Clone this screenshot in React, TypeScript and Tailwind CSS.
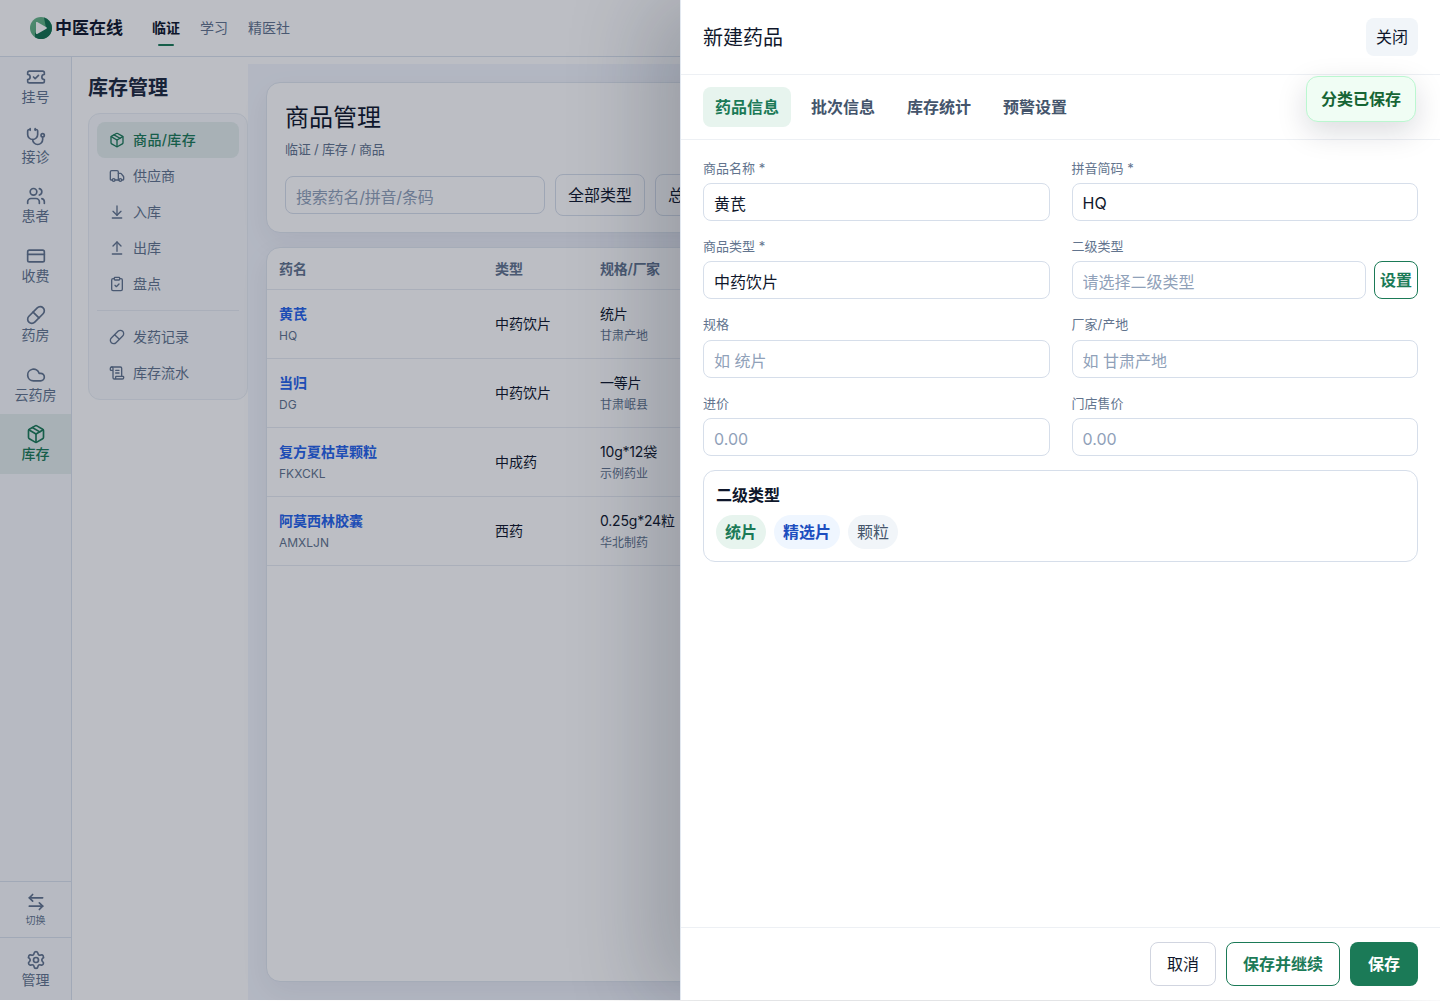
import {
  ArrowDownToLine,
  ArrowLeftRight,
  ArrowUpFromLine,
  ClipboardCheck,
  Cloud,
  CreditCard,
  Package,
  Pill,
  ScrollText,
  Settings,
  Stethoscope,
  TicketCheck,
  Truck,
  Users,
} from "lucide-react";

const railItems = [
  { label: "挂号", icon: TicketCheck },
  { label: "接诊", icon: Stethoscope },
  { label: "患者", icon: Users },
  { label: "收费", icon: CreditCard },
  { label: "药房", icon: Pill },
  { label: "云药房", icon: Cloud },
  { label: "库存", icon: Package, active: true },
];

const stockMenu = [
  { label: "商品/库存", icon: Package, active: true },
  { label: "供应商", icon: Truck },
  { label: "入库", icon: ArrowDownToLine },
  { label: "出库", icon: ArrowUpFromLine },
  { label: "盘点", icon: ClipboardCheck },
];

const recordMenu = [
  { label: "发药记录", icon: Pill },
  { label: "库存流水", icon: ScrollText },
];

const products = [
  { name: "黄芪", code: "HQ", type: "中药饮片", spec: "统片", maker: "甘肃产地" },
  { name: "当归", code: "DG", type: "中药饮片", spec: "一等片", maker: "甘肃岷县" },
  { name: "复方夏枯草颗粒", code: "FKXCKL", type: "中成药", spec: "10g*12袋", maker: "示例药业" },
  { name: "阿莫西林胶囊", code: "AMXLJN", type: "西药", spec: "0.25g*24粒", maker: "华北制药" },
];

function Logo() {
  return (
    <svg width="22" height="22" viewBox="0 0 22 22">
      <defs>
        <linearGradient id="logo" x1="0" y1="0" x2="1" y2="1">
          <stop offset="0" stopColor="#6db98c" />
          <stop offset="1" stopColor="#4aa577" />
        </linearGradient>
      </defs>
      <circle cx="11" cy="11" r="11" fill="url(#logo)" />
      <path d="M14 .5A11 11 0 0 1 22 11 11 11 0 0 1 5 20.3V16l11-5z" fill="#12714f" />
      <path d="M6 5.7v10.6a.8.8 0 0 0 1.2.7l9.2-5.3a.8.8 0 0 0 0-1.4L7.2 5a.8.8 0 0 0-1.2.7z" fill="#fff" />
    </svg>
  );
}

function Header() {
  return (
    <header className="flex h-[57px] shrink-0 items-center border-b border-[#dae2ee] bg-white pl-[30px]">
      <Logo />
      <span className="ml-[3px] pt-0.5 text-[17px] font-bold text-slate-900">中医在线</span>
      <nav className="ml-[29px] flex h-full items-center gap-5 text-sm text-slate-500">
        <a className="relative font-bold text-slate-900">
          临证
          <span className="absolute -bottom-2 left-1.5 h-0.5 w-4 rounded-full bg-[#1b7a57]" />
        </a>
        <a>学习</a>
        <a>精医社</a>
      </nav>
    </header>
  );
}

function Rail() {
  return (
    <aside className="flex w-[72px] shrink-0 flex-col border-r border-[#dae2ee] bg-slate-50 text-slate-500">
      {railItems.map(({ label, icon: Icon, active }) => (
        <div
          key={label}
          className={`flex h-[59.5px] flex-col items-center gap-px pt-2.5 text-sm leading-[17.5px] ${
            active ? "bg-[#e3edec] font-medium text-[#1b7a57]" : ""
          }`}
        >
          <Icon size={20} strokeWidth={2} />
          {label}
        </div>
      ))}
      <div className="mt-auto flex h-14 flex-col items-center gap-0.5 border-t border-[#dae2ee] pt-2.5 text-[10px] leading-3">
        <ArrowLeftRight size={20} strokeWidth={2} />
        切换
      </div>
      <div className="flex h-[63px] flex-col items-center gap-px border-t border-[#dae2ee] pt-3 text-sm leading-[17.5px]">
        <Settings size={20} strokeWidth={2} />
        管理
      </div>
    </aside>
  );
}

function MenuItem({ label, icon: Icon, active }: { label: string; icon: typeof Pill; active?: boolean }) {
  return (
    <div
      className={`flex h-9 items-center gap-2 rounded-lg px-3 text-sm ${
        active ? "bg-[#e3edec] font-medium tracking-[0.4px] text-[#1b7a57]" : "text-slate-500"
      }`}
    >
      <Icon size={16} strokeWidth={2} />
      {label}
    </div>
  );
}

function StockMenu() {
  return (
    <section className="w-44 shrink-0 bg-white pl-4 pt-4">
      <h2 className="text-xl leading-[30px] font-bold text-slate-800">库存管理</h2>
      <div className="mt-2.5 rounded-xl border border-[#e9eef4] bg-slate-50 p-2">
        {stockMenu.map((item) => (
          <MenuItem key={item.label} {...item} />
        ))}
        <div className="my-2 h-px bg-[#e6ebf2]" />
        {recordMenu.map((item) => (
          <MenuItem key={item.label} {...item} />
        ))}
      </div>
    </section>
  );
}

function Products() {
  return (
    <main className="mt-[7px] flex flex-1 flex-col gap-3.5 bg-[#f3f6fd] p-[18px]">
      <div className="h-[151px] shrink-0 rounded-[14px] border border-[#dfe6ef] bg-white px-[18px] pt-[17px] shadow-[0_10px_30px_rgba(15,23,42,0.06)]">
        <h1 className="text-2xl leading-9 text-slate-900">商品管理</h1>
        <p className="mt-1 text-[13px] leading-[19px] tracking-[-0.2px] text-slate-500">临证 / 库存 / 商品</p>
        <div className="mt-[15px] flex items-center gap-2.5">
          <input
            className="h-[38px] w-[260px] rounded-lg border border-[#d6deea] bg-white px-2.5 pt-1 tracking-[-0.2px] text-slate-900 placeholder:text-slate-400"
            placeholder="搜索药名/拼音/条码"
          />
          <button className="h-[42px] w-[90px] shrink-0 rounded-lg border border-[#d6deea] bg-white text-slate-900">全部类型</button>
          <button className="h-[42px] w-[90px] shrink-0 rounded-lg border border-[#d6deea] bg-white text-slate-900">总部类型</button>
        </div>
      </div>

      <div className="flex-1 overflow-hidden rounded-[14px] border border-[#dfe6ef] bg-white text-sm shadow-[0_10px_30px_rgba(15,23,42,0.06)]">
        <div className="grid h-[42px] grid-cols-[216px_105px_1fr] items-center border-b border-[#e6ebf2] px-3 font-semibold text-slate-500">
          <span>药名</span>
          <span>类型</span>
          <span className="tracking-[-0.3px]">规格/厂家</span>
        </div>
        {products.map((p) => (
          <div
            key={p.code}
            className="grid h-[69px] grid-cols-[216px_105px_1fr] items-center border-b border-[#e6ebf2] px-3 text-slate-900"
          >
            <div>
              <div className="leading-[21px] font-bold text-[#2563eb]">{p.name}</div>
              <div className="mt-[3px] text-xs leading-[18px] text-slate-500">{p.code}</div>
            </div>
            <div>{p.type}</div>
            <div>
              <div className="leading-[21px] tracking-[-0.2px]">{p.spec}</div>
              <div className="mt-[3px] text-xs leading-[18px] text-slate-500">{p.maker}</div>
            </div>
          </div>
        ))}
      </div>
    </main>
  );
}

interface FieldProps {
  label: string;
  value?: string;
  placeholder?: string;
  action?: string;
}

function Field({ label, value, placeholder, action }: FieldProps) {
  return (
    <div className="flex min-w-0 flex-col gap-[6.4px]">
      <label className="text-[13px] leading-[18px] text-slate-500">{label}</label>
      <div className="flex gap-2">
        <input
          className="h-[38px] min-w-0 flex-1 rounded-lg border border-[#d6deea] bg-white px-2.5 pt-0.5 text-slate-900 placeholder-shown:pt-1 placeholder:text-slate-400"
          defaultValue={value}
          placeholder={placeholder}
        />
        {action && (
          <button className="h-[38px] w-11 shrink-0 rounded-lg border border-[#1b7a57] bg-white font-semibold text-[#1b7a57]">
            {action}
          </button>
        )}
      </div>
    </div>
  );
}

function Drawer() {
  return (
    <div className="absolute top-0 right-0 flex h-[1000px] w-[760px] flex-col border-l border-slate-200 bg-white shadow-[-30px_0_80px_rgba(15,23,42,0.2)]">
      <div className="flex h-[75px] shrink-0 items-center justify-between border-b border-[#edf0f4] px-[22px]">
        <h2 className="pt-0.5 text-xl text-slate-900">新建药品</h2>
        <button className="h-[38px] w-[52px] rounded-lg bg-slate-100 text-slate-900">关闭</button>
      </div>

      <div className="flex h-[65px] shrink-0 items-center gap-2 border-b border-[#edf0f4] px-[22px] font-semibold text-slate-600">
        <button className="h-10 rounded-lg bg-[#e7f4ee] px-3 text-[#1b7a57]">药品信息</button>
        <button className="h-10 px-3">批次信息</button>
        <button className="h-10 px-3">库存统计</button>
        <button className="h-10 px-3">预警设置</button>
      </div>

      <div className="flex-1 px-[22px] pt-[18.6px]">
        <div className="grid grid-cols-2 gap-x-[22px] gap-y-4">
          <Field label="商品名称 *" value="黄芪" />
          <Field label="拼音简码 *" value="HQ" />
          <Field label="商品类型 *" value="中药饮片" />
          <Field label="二级类型" placeholder="请选择二级类型" action="设置" />
          <Field label="规格" placeholder="如 统片" />
          <Field label="厂家/产地" placeholder="如 甘肃产地" />
          <Field label="进价" placeholder="0.00" />
          <Field label="门店售价" placeholder="0.00" />
        </div>

        <div className="mt-3.5 rounded-xl border border-[#d6deea] p-3">
          <h3 className="leading-6 font-bold text-slate-900">二级类型</h3>
          <div className="mt-2 flex gap-2 leading-[34px]">
            <span className="rounded-full bg-[#e7f4ee] px-[9px] font-semibold text-[#1b7a57]">统片</span>
            <span className="rounded-full bg-blue-50 px-[9px] font-semibold text-[#1d4ec0]">精选片</span>
            <span className="rounded-full bg-slate-100 px-[9px] text-slate-600">颗粒</span>
          </div>
        </div>
      </div>

      <div className="flex h-[73px] shrink-0 items-center justify-end gap-2.5 border-t border-[#edf0f4] px-[22px]">
        <button className="h-11 w-[66px] rounded-lg border border-[#d1d5e0] bg-white text-slate-900">取消</button>
        <button className="h-11 w-[114px] rounded-lg border border-[#1b7a57] bg-white font-semibold text-[#1b7a57]">保存并继续</button>
        <button className="h-11 w-[68px] rounded-lg bg-[#1b7a57] font-bold text-white">保存</button>
      </div>
    </div>
  );
}

export default function App() {
  return (
    <div className="relative h-[1001px] w-[1440px] overflow-hidden bg-white font-['Inter','Noto_Sans_CJK_SC',sans-serif]">
      <div className="flex h-[1000px] flex-col">
        <Header />
        <div className="flex min-h-0 flex-1">
          <Rail />
          <StockMenu />
          <Products />
        </div>
      </div>

      <div className="absolute top-0 left-0 h-[1000px] w-full bg-[rgba(15,23,42,0.28)]" />
      <Drawer />

      <div className="absolute top-[76px] right-6 rounded-xl border border-[#bbf7d0] bg-[#f0fdf4] px-3.5 py-2.5 font-semibold text-[#166534] shadow-[0_10px_30px_rgba(15,23,42,0.15)]">
        分类已保存
      </div>
    </div>
  );
}
